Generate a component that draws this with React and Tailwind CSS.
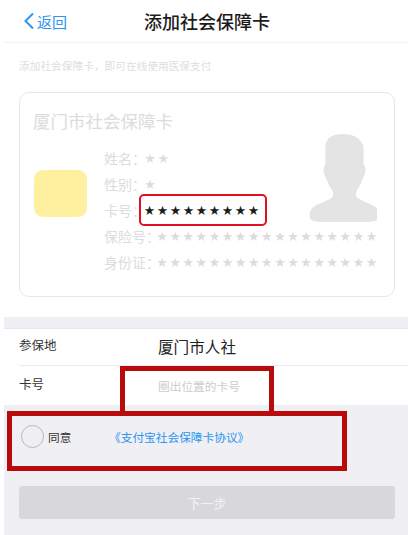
import React from "react";

const FONT = "[font-family:'Noto_Sans_CJK_SC','Liberation_Sans',sans-serif]";

const Stars = ({ count, className, wide }) => (
  <span className={`flex ${className}`}>
    {Array.from({ length: count }).map((_, i) => (
      <span key={i} className={`${wide ? "w-[13.1px]" : "w-[13px]"} text-center text-[10.500px] leading-none`}>
        ★
      </span>
    ))}
  </span>
);

const CardRow = ({ label, children }) => (
  <div className="flex h-[26px] items-center text-[14px] text-[#dcdcdc]">
    <span className="whitespace-nowrap">{label}</span>
    {/* half width colon through the font's own feature */}
    <span className="whitespace-nowrap [font-feature-settings:'halt']">{"\uFF1A"}</span>
    {children}
  </div>
);

const Silhouette = () => (
  <svg width="68" height="88" viewBox="0 0 68 88" className="shrink-0">
    <path
      fill="#e4e4e4"
      d="M34 0c-11 0-17 4-17.500 12-.3 6 .2 14-.500 19-.4 2-1.500 1-1.500 5 0 4 2 7 3 9 1 3 3 8 6 12 1 2 1 5-1 7-4 3-12 5-18 9-3 2-4 5-4 9 0 4 3 5 7 5.500 8 1 19 1.500 27 1.500s21-.500 29-1.500c4-.500 7-1.500 7-5.500 0-4-1-7-4-9-6-4-14-6-18-9-2-2-2-5-1-7 3-4 5-9 6-12 1-2 3-5 3-9 0-4-1.100-3-1.500-5-.7-5-.2-13-.500-19C51 4 45 0 34 0z"
    />
  </svg>
);

const App = () => {
  return (
    <div className={`relative h-[535px] w-[408px] overflow-hidden bg-white pl-1 ${FONT}`}>
      {/* nav bar */}
      <header className="flex h-[43px] items-center border-b border-[#f3f3f3]">
        <div className="flex w-[140px] items-center pl-[18px] text-[#2b95f0]">
          <svg width="13" height="18" viewBox="0 0 13 18" fill="none" stroke="currentColor" strokeWidth="2">
            <path d="M11 1.500 3.500 9l7.500 7.500" />
          </svg>
          <span className="ml-[2px] text-[15px] leading-none">返回</span>
        </div>
        <h1 className="text-[18px] font-medium text-[#1c1c1c]">添加社会保障卡</h1>
      </header>

      <p className="mt-4 pl-[15px] text-[10.700px] leading-[14px] text-[#dedede]">
        添加社会保障卡{"\uFF0C"}即可在线使用医保支付
      </p>

      {/* card preview */}
      <section className="ml-[15px] mt-[19px] h-[205px] w-[376px] rounded-[10px] border border-[#e6e6e6] pl-[13px] pr-[17px] pt-[13px]">
        <h2 className="text-[17.500px] leading-[29px] text-[#dcdcdc]">厦门市社会保障卡</h2>
        <div className="relative mt-[10px] flex">
          <div className="ml-[1px] mt-[25px] h-[47px] w-[53px] shrink-0 rounded-[9px] bg-[#fff0a0]" />
          <div className="ml-[17px] flex-1">
            <CardRow label="姓名">
              <Stars count={2} className="ml-[4.500px]" wide />
            </CardRow>
            <CardRow label="性别">
              <Stars count={1} className="ml-[4.500px]" wide />
            </CardRow>
            <CardRow label="卡号">
              <span className="relative -my-[3px] flex h-8 w-[128px] items-center rounded-[5px] border-2 border-[#e0101c] bg-white pl-[2px] text-[#1c1c1c]">
                <Stars count={9} />
              </span>
            </CardRow>
            <CardRow label="保险号">
              <Stars count={17} className="ml-[2.500px]" wide />
            </CardRow>
            <CardRow label="身份证">
              <Stars count={17} className="ml-[2.500px]" wide />
            </CardRow>
          </div>
          <div className="absolute -top-[11px] right-0">
            <Silhouette />
          </div>
        </div>
      </section>

      {/* form */}
      <div className="mt-5 h-[11px] bg-[#efeff4]" />
      <div className="border-t border-[#e8e8e8] pl-[15px]">
        <div className="flex h-[37px] items-center border-b border-[#ececec] pb-[3px]">
          <span className="w-[139px] text-[12.500px] text-[#333333]">参保地</span>
          <span className="pt-[2px] text-[15.600px] text-[#222222]">厦门市人社</span>
        </div>
        <div className="flex h-[39px] items-center pb-[2px]">
          <span className="w-[139px] text-[12.500px] text-[#333333]">卡号</span>
          <span className="pt-[3px] text-[11.700px] text-[#cccccc]">圈出位置的卡号</span>
        </div>
      </div>

      {/* footer */}
      <div className="h-[132px] bg-[#efeff4] pl-[15px] pr-[13px] pt-[20px]">
        <div className="flex items-center pl-[2px]">
          <span className="h-[23px] w-[23px] rounded-full border border-[#b9b9b9]" />
          <span className="ml-[4px] w-[61px] text-[11.700px] text-[#333333]">同意</span>
          <span className="text-[11.700px] text-[#2b95f0]">《支付宝社会保障卡协议》</span>
        </div>
        <button className="mt-[38px] block h-[33px] w-full rounded-[3px] bg-[#d8d8dc] text-[13px] text-[#f1f1f3]">
          下一步
        </button>
      </div>

      {/* annotation boxes drawn over the screenshot */}
      <div className="absolute left-[120px] top-[366px] h-[50px] w-[154px] border-[5px] border-[#b80c0c]" />
      <div className="absolute left-[7px] top-[411px] h-[60px] w-[340px] border-[5px] border-[#b80c0c]" />
    </div>
  );
};

export default App;
